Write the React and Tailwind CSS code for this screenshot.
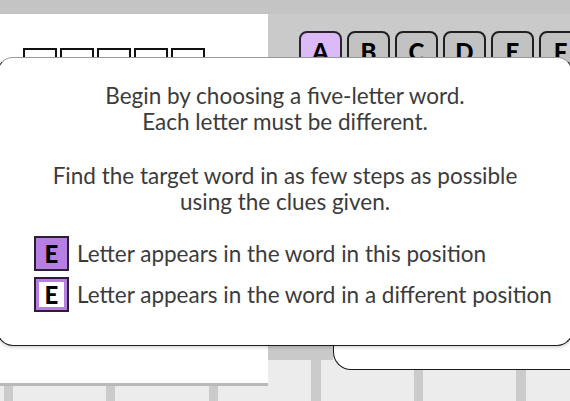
import React from 'react'

const topLetters = ['A', 'B', 'C', 'D', 'E', 'F']

function LetterTile({ letter, active }) {
  return (
    <div
      className={`w-[43px] h-[46px] shrink-0 rounded-[8px] border-2 flex justify-center pt-[7px] text-[24px] font-black leading-none text-black ${
        active ? 'bg-[#dcbaf7] border-[#2b2233]' : 'bg-[#c2c2c2] border-[#1f1f1f]'
      }`}
    >
      {letter}
    </div>
  )
}

export default function App() {
  return (
    <div
      className="relative w-[570px] h-[401px] overflow-hidden bg-[#ececec] bg-[repeating-linear-gradient(90deg,#cbcbcb_0px,#cbcbcb_9px,#ececec_9px,#ececec_102.5px)] bg-[position:4px_0]"
      style={{ fontFamily: 'Lato, "Noto Sans", sans-serif' }}
    >
      {/* background game board */}
      <div className="flex items-start h-full">
        <div className="w-[268px] shrink-0 flex flex-col">
          <div className="h-[14px] bg-[#c4c4c4]" />
          <div className="h-[372px] bg-white border-b-[3px] border-[#b9b9b9] pt-[34px] pl-[23px]">
            <div className="flex gap-[3px]">
              {[0, 1, 2, 3, 4].map((i) => (
                <div key={i} className="w-[34px] h-[34px] border-2 border-[#111] bg-white" />
              ))}
            </div>
          </div>
        </div>

        <div className="flex-1 flex flex-col h-[370px]">
          <div className="h-[14px] bg-[#c4c4c4]" />
          <div className="h-[86px] bg-[#cacaca] pt-[17px] pl-[31px] flex gap-[5px]">
            {topLetters.map((l, i) => (
              <LetterTile key={l} letter={l} active={i === 0} />
            ))}
          </div>
          <div className="flex-1 flex">
            <div className="w-[65px] shrink-0 h-[260px] bg-[#c9c9c9]" />
            <div className="flex-1 bg-white border-l border-b border-[#1a1a1a] rounded-bl-[18px]" />
          </div>
        </div>
      </div>

      {/* instructions modal */}
      <div className="absolute left-[-3px] right-[-3px] top-[57px] h-[289px] bg-white rounded-[16px] border border-[#1e1e1e] border-t-[#9a9a9a] shadow-[0_2px_3px_rgba(0,0,0,0.15)] text-[#3b3b3b] text-[22.5px] leading-[26px]">
        <div className="flex flex-col items-center text-center pt-[25px]">
          <p>Begin by choosing a five-letter word.</p>
          <p>Each letter must be different.</p>
          <p className="mt-[28px]">Find the target word in as few steps as possible</p>
          <p>using the clues given.</p>
        </div>

        <div className="flex flex-col gap-[6px] mt-[21px] pl-[36px]">
          <div className="flex items-center gap-[8px]">
            <div className="w-[35px] h-[35px] bg-[#b77ee4] border-2 border-[#2b1f35] flex items-center justify-center text-[24px] font-black text-black">
              E
            </div>
            <span>Letter appears in the word in this position</span>
          </div>
          <div className="flex items-center gap-[8px]">
            <div className="w-[35px] h-[35px] bg-white border-2 border-[#2b1f35] shadow-[inset_0_0_0_3px_#b77ee4] flex items-center justify-center text-[24px] font-black text-black">
              E
            </div>
            <span>Letter appears in the word in a different position</span>
          </div>
        </div>
      </div>
    </div>
  )
}
